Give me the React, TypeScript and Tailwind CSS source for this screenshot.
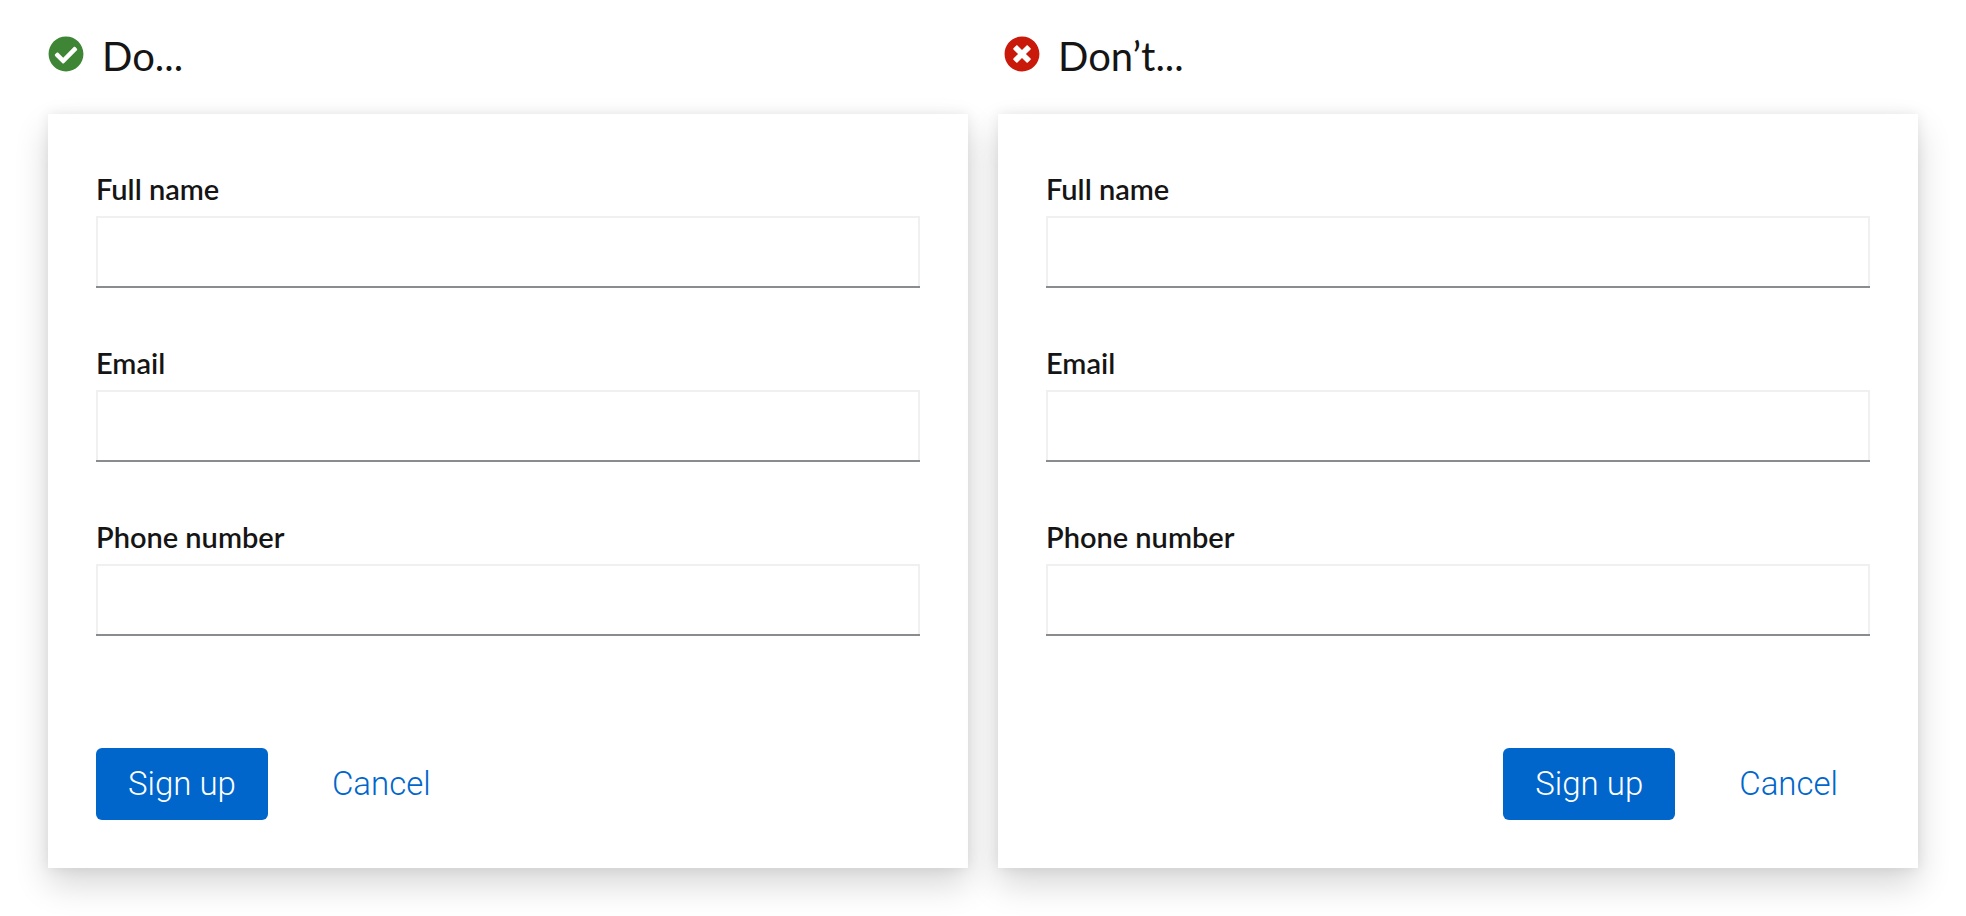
import { useId } from "react";
import { FaCheckCircle, FaTimesCircle } from "react-icons/fa";

const fields = [
  { label: "Full name", name: "name", type: "text" },
  { label: "Email", name: "email", type: "email" },
  { label: "Phone number", name: "phone", type: "tel" },
];

function SignUpForm({ alignEnd = false }: { alignEnd?: boolean }) {
  const id = useId();
  return (
    <form
      onSubmit={(event) => event.preventDefault()}
      className="bg-white p-12 shadow-[0_16px_32px_rgba(3,3,3,0.16),0_0_12px_rgba(3,3,3,0.08)]"
    >
      <div className="flex flex-col gap-14 pt-2">
        {fields.map((field) => (
          <div key={field.name} className="flex flex-col gap-2">
            <label
              htmlFor={`${id}-${field.name}`}
              className="text-[29px] leading-[38px] font-semibold text-[#151515]"
            >
              {field.label}
            </label>
            <div className="flex h-[72px] border-b-2 border-[#8a8d90] focus-within:border-[#0066cc]">
              <input
                id={`${id}-${field.name}`}
                name={field.name}
                type={field.type}
                className="min-w-0 flex-1 border-2 border-b-0 border-[#f0f0f0] bg-white px-4 text-[29px] text-[#151515] outline-none"
              />
            </div>
          </div>
        ))}
      </div>
      <div
        className={
          alignEnd
            ? "mt-28 flex justify-end gap-8 font-['Roboto',sans-serif]"
            : "mt-28 flex gap-8 font-['Roboto',sans-serif]"
        }
      >
        <button
          type="submit"
          className="h-[72px] rounded-md bg-[#0066cc] px-8 text-[33px] leading-[48px] font-light text-white"
        >
          Sign up
        </button>
        <button
          type="button"
          className="h-[72px] rounded-md px-8 text-[33px] leading-[48px] font-light text-[#0066cc]"
        >
          Cancel
        </button>
      </div>
    </form>
  );
}

export default function App() {
  return (
    <main className="grid min-h-screen grid-cols-2 content-start gap-x-[30px] bg-white px-12 pt-7 font-['Lato',sans-serif]">
      <section>
        <h2 className="mb-[30px] flex gap-[18px] text-[40px] leading-[56px] text-[#151515]">
          <FaCheckCircle className="mt-2 size-9 text-[#3e8635]" aria-hidden="true" />
          Do...
        </h2>
        <SignUpForm />
      </section>
      <section>
        <h2 className="mb-[30px] flex gap-[18px] pl-1.5 text-[40px] leading-[56px] text-[#151515]">
          <FaTimesCircle className="mt-2 size-9 text-[#c9190b]" aria-hidden="true" />
          Don’t...
        </h2>
        <SignUpForm alignEnd />
      </section>
    </main>
  );
}
